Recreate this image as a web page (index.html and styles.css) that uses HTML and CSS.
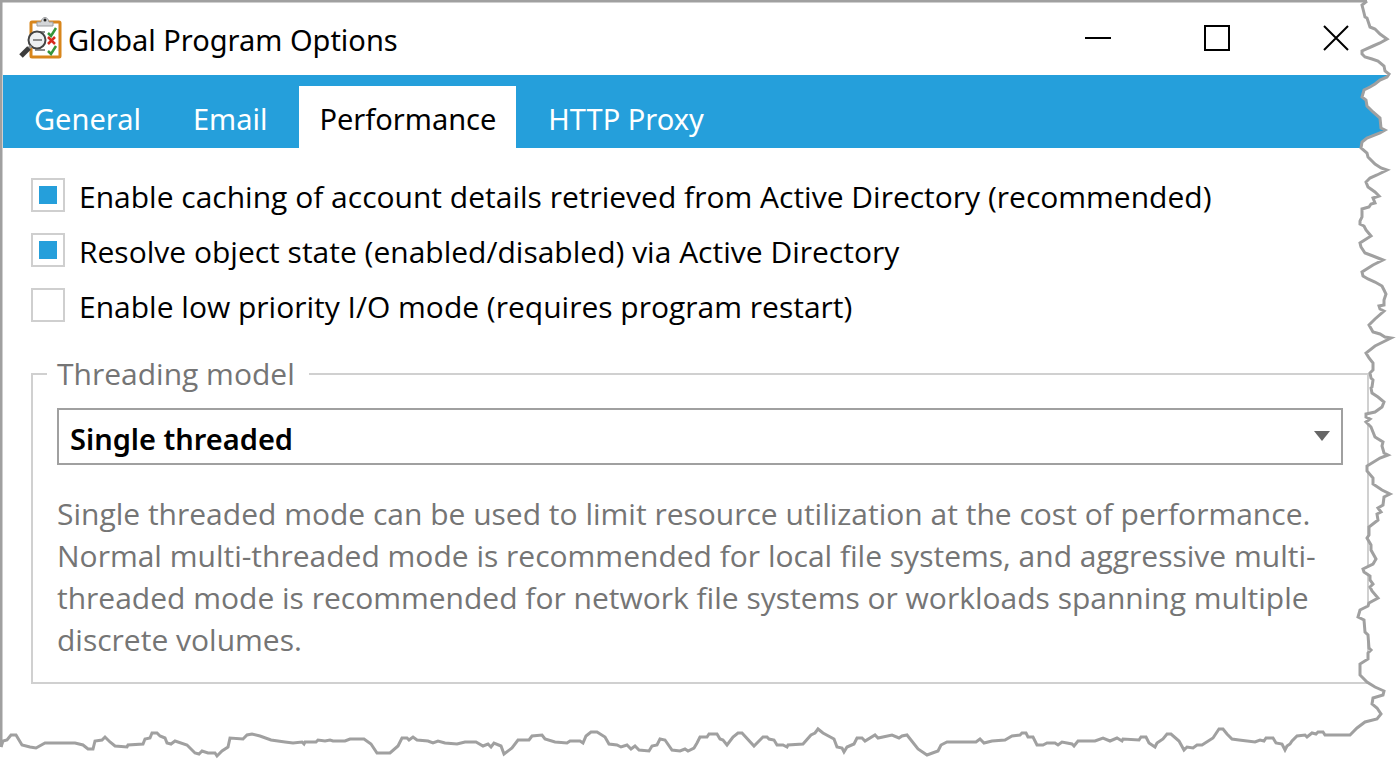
FILE: index.html
```html
<!DOCTYPE html>
<html lang="en">
<head>
  <meta charset="UTF-8">
  <meta name="viewport" content="width=device-width, initial-scale=1">
  <title>Global Program Options</title>
  <link rel="stylesheet" href="styles.css">
</head>
<body>
  <div class="window">
    <header class="titlebar">
      <svg class="app-icon" viewBox="0 0 44 44" aria-hidden="true">
        <rect x="12" y="5" width="29" height="35" rx="1" fill="#fff" stroke="#d8861c" stroke-width="3"/>
        <path d="M18 9V5h4c1-6 7-6 8 0h4v4z" fill="#d4d6d8" stroke="#9a9c9e"/>
        <circle cx="26" cy="3" r="1.5" fill="#222"/>
        <path d="M16 15h10M16 33h10" stroke="#8c8c8c" stroke-width="2"/>
        <path d="M29 16l3 3 5-8M29 34l3 3 5-8" fill="none" stroke="#35953a" stroke-width="2.5"/>
        <path d="M29 20l7 7M36 20l-7 7" stroke="#d62a1e" stroke-width="2.5"/>
        <circle cx="18" cy="23" r="8.5" fill="#eef0f2" stroke="#444" stroke-width="2"/>
        <path d="M14 23h9" stroke="#8c8c8c" stroke-width="2"/>
        <path d="M12 29l-3 3" stroke="#999" stroke-width="3"/>
        <path d="M10 31l-8 8" stroke="#3c3c3c" stroke-width="5"/>
      </svg>
      <h1>Global Program Options</h1>
      <div class="window-buttons">
        <button type="button" aria-label="Minimize">
          <svg viewBox="0 0 26 26"><path d="M0 13h26"/></svg>
        </button>
        <button type="button" aria-label="Maximize">
          <svg viewBox="0 0 26 26"><path d="M1 1h24v24H1z"/></svg>
        </button>
        <button type="button" aria-label="Close">
          <svg viewBox="0 0 26 26"><path d="M1 1l24 24M25 1L1 25"/></svg>
        </button>
      </div>
    </header>

    <nav class="tabs">
      <a href="#general">General</a>
      <a href="#email">Email</a>
      <a href="#performance" class="active">Performance</a>
      <a href="#proxy">HTTP Proxy</a>
    </nav>

    <form class="options">
      <label class="check"><input type="checkbox" checked> Enable caching of account details retrieved from Active Directory (recommended)</label>
      <label class="check"><input type="checkbox" checked> Resolve object state (enabled/disabled) via Active Directory</label>
      <label class="check"><input type="checkbox"> Enable low priority I/O mode (requires program restart)</label>

      <fieldset class="group">
        <legend><label for="threading">Threading model</label></legend>
        <div class="select-box">
          <select id="threading">
            <option>Single threaded</option>
            <option>Multi-threaded (normal)</option>
            <option>Multi-threaded (aggressive)</option>
          </select>
          <svg class="arrow" viewBox="0 0 16 10" aria-hidden="true"><path d="M0 0h16L8 10z"/></svg>
        </div>
        <p>Single threaded mode can be used to limit resource utilization at the cost of performance. Normal multi-threaded mode is recommended for local file systems, and aggressive multi-threaded mode is recommended for network file systems or workloads spanning multiple discrete volumes.</p>
      </fieldset>
    </form>

    <!-- window border and torn paper edge, right and bottom -->
    <svg class="torn" viewBox="0 0 1400 768" preserveAspectRatio="none" aria-hidden="true">
      <defs>
        <path id="edge" d="M1367 1L1362 5 1363 9 1364 13 1365 17 1367 18 1370 27 1375 29 1380 34 1387 39 1380 43 1373 46 1362 51 1362 54 1365 57 1372 59 1378 61 1384 66 1385 71 1389 74 1387 77 1380 80 1375 84 1370 87 1364 90 1362 97 1366 100 1367 106 1373 112 1380 118 1381 128 1385 130 1380 133 1367 138 1362 142 1361 148 1367 153 1368 157 1375 164 1381 168 1387 170 1377 175 1370 178 1366 182 1368 187 1375 192 1379 196
          1373 198 1375 203 1371 204 1369 207 1362 209 1362 217 1360 221 1360 224 1364 226 1366 230 1371 236 1360 243 1361 247 1365 253 1373 256 1383 260 1373 265 1362 272 1363 276 1368 279 1375 282 1382 286 1384 290 1386 294 1384 300 1384 305 1379 306 1380 309 1384 311 1375 319 1369 325 1373 332 1380 334 1385 337 1391 338 1383 342 1375 346 1366 353 1369 358 1373 363 1373 370 1370 373 1371 378 1373 380 1372 387
          1371 388 1372 393 1378 397 1384 402 1382 407 1375 412 1366 414 1366 417 1370 419 1366 422 1371 427 1375 437 1383 442 1382 446 1384 453 1388 455 1380 458 1367 466 1367 471 1373 478 1373 484 1382 490 1390 494 1384 497 1383 505 1378 508 1381 512 1377 514 1378 520 1369 527 1369 535 1367 538 1371 545 1371 550 1376 559 1373 564 1363 569 1364 572 1370 576
          1370 580 1373 584 1370 587 1372 591 1378 598 1369 603 1368 606 1360 610 1358 617 1364 620 1365 632 1368 635 1369 648 1371 650 1368 653 1368 659 1360 664 1360 675 1367 682 1375 687 1384 691 1383 695 1373 698 1372 704 1377 708 1381 714 1377 719 1365 722 1357 728 1350 735
          1333 735 1325 735 1323 732 1318 732 1316 734 1312 733 1307 737 1305 735 1297 736 1292 741 1290 744 1287 746 1285 750 1282 744 1276 743 1273 738 1266 738 1264 741 1260 740 1255 742 1239 740 1232 739 1227 734 1223 729 1219 729 1213 738 1202 745 1197 745 1193 748 1187 747 1184 750 1179 741 1171 734 1167 734 1163 739 1157 743 1155 747 1149 743 1146 737 1141 737 1139 740 1123 739 1122 741 1117 738 1110 741 1103 738 1095 741 1078 741 1074 746 1072 744 1062 742 1058 745 1055 743 1047 743
          1043 745 1037 745 1033 737 1028 737 1026 733 1022 733 1020 735 1012 736 1005 740 992 741 984 743 980 739 976 742 947 742 941 745 938 751 927 755 918 749 907 735 902 736 899 738 892 735 878 738 875 735 865 741 862 738 857 738 854 744 847 747 844 752 842 748 837 747 834 739 823 733 818 729 815 733 811 735 803 744 788 745 787 747 783 745 777 745 774 740 769 739 767 737 763 737 754 746 742 733 738 733 733 737 727 745 723 740 720 739 717 734 709 734 707 737 700 737
          697 743 694 748 688 751 685 749 680 751 672 750 665 740 660 739 657 745 652 746 649 751 639 750 635 746 631 749 627 745 621 747 617 745 609 744 605 737 597 732 591 732 586 736 583 743 580 741 570 741 567 743 555 742 545 739 542 735 532 736 529 740 518 740 512 748 504 754 501 746 494 743 491 747 488 744 483 746 476 742 465 742 457 744 445 743 438 741 433 743 428 741 417 740 413 737 409 740 407 738 402 738 398 746 390 753 377 753 371 744 364 739 350 739
          345 741 333 741 330 740 325 741 318 740 316 742 305 742 304 744 302 742 293 743 285 742 271 740 260 736 252 734 247 735 243 739 230 738 228 747 222 751 217 756 215 753 208 753 202 751 199 754 195 753 187 745 175 741 171 744 167 743 165 738 160 736 157 733 152 733 150 738 145 739 143 744 128 745 127 747 115 746 110 742 105 737 102 740 95 741 93 749 88 749 83 745 75 743 45 743 36 748 30 747 22 745 16 735 11 735 7 740 3 741 1 747"/>
        <mask id="outside">
          <rect width="1400" height="768" fill="#fff"/>
          <path d="M1367 1V0H0V747H1z" fill="#000" stroke="#000" stroke-width="2"/>
          <use href="#edge" fill="#000"/>
        </mask>
      </defs>
      <rect width="1400" height="768" fill="#fff" mask="url(#outside)"/>
      <path class="torn-line" d="M1367 1H1V747"/>
      <use href="#edge" class="torn-line"/>
    </svg>
  </div>
</body>
</html>
```

FILE: styles.css
```css
* { box-sizing: border-box; }
body {
  margin: 0;
  background: #fff;
  color: #000;
  font-family: "Open Sans", "Noto Sans", sans-serif;
  font-size: 30px;
}
.window {
  position: relative;
  min-height: 100vh;
  overflow: hidden;
  padding: 3px 0 0 3px;
}

/* title bar */
.titlebar { display: flex; align-items: center; height: 72px; padding: 0 5px 0 16px; }
.app-icon { width: 44px; height: 44px; margin-right: 5px; }
h1 { margin: 0; font: 400 29px "Noto Sans", sans-serif; }
.window-buttons { display: flex; height: 100%; margin-left: auto; }
.window-buttons button {
  width: 119px;
  padding: 0;
  border: 0;
  background: none;
}
.window-buttons svg {
  width: 26px;
  height: 26px;
  fill: none;
  stroke: #000;
  stroke-width: 2;
}

/* tabs */
.tabs {
  display: flex;
  align-items: flex-end;
  gap: 12px;
  height: 73px;
  padding-left: 11px;
  background: #259fdb;
  font: 29px "Noto Sans", sans-serif;
}
.tabs a {
  height: 62px;
  padding: 0 20px;
  color: #fff;
  line-height: 66px;
  text-decoration: none;
}
.tabs .active { background: #fff; color: #000; }

.options { padding: 19px 31px 80px 28px; }
.check { display: flex; align-items: center; gap: 14px; height: 55px; padding-top: 4px; }
.check input {
  appearance: none;
  flex: none;
  width: 34px;
  height: 34px;
  margin: 0 0 4px;
  padding: 6px;
  border: 2px solid #cfcfcf;
  background: #fff;
}
.check input:checked { background: #259fdb content-box; }

.group {
  margin: 23px 0 0;
  padding: 15px 24px 21px;
  border: 2px solid #d0d0d0;
  color: #757575;
}
.group legend { margin-left: -10px; padding: 0 14px 0 10px; line-height: 38px; }
.group p { margin: 28px 0 0; line-height: 42px; }
.select-box { position: relative; }
.select-box select {
  appearance: none;
  width: 100%;
  height: 57px;
  padding: 3px 40px 0 11px;
  border: 2px solid #a0a0a0;
  border-radius: 0;
  background: #fff;
  color: #000;
  font: 600 29px "Noto Sans", sans-serif;
}
.arrow {
  position: absolute;
  top: 23px;
  right: 13px;
  width: 16px;
  height: 10px;
  fill: #666;
  pointer-events: none;
}

.torn {
  position: absolute;
  top: 0;
  left: 0;
  width: 100%;
  height: 100%;
  pointer-events: none;
}
.torn-line { fill: none; stroke: #a0a0a0; stroke-width: 3; }
```
